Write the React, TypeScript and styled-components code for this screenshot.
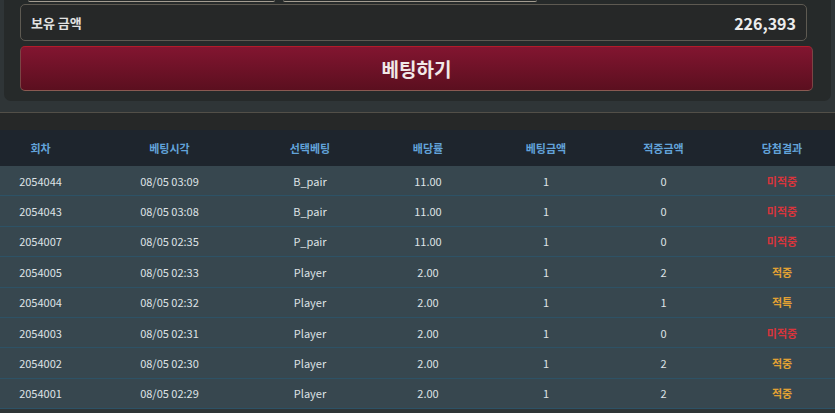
import React from 'react';
import styled, { createGlobalStyle } from 'styled-components';

type Result = 'win' | 'lose' | 'tie';

interface BetRow {
    round: string;
    time: string;
    pick: string;
    odds: string;
    amount: string;
    payout: string;
    result: Result;
}

const rows: BetRow[] = [
    { round: '2054044', time: '08/05 03:09', pick: 'B_pair', odds: '11.00', amount: '1', payout: '0', result: 'lose' },
    { round: '2054043', time: '08/05 03:08', pick: 'B_pair', odds: '11.00', amount: '1', payout: '0', result: 'lose' },
    { round: '2054007', time: '08/05 02:35', pick: 'P_pair', odds: '11.00', amount: '1', payout: '0', result: 'lose' },
    { round: '2054005', time: '08/05 02:33', pick: 'Player', odds: '2.00', amount: '1', payout: '2', result: 'win' },
    { round: '2054004', time: '08/05 02:32', pick: 'Player', odds: '2.00', amount: '1', payout: '1', result: 'tie' },
    { round: '2054003', time: '08/05 02:31', pick: 'Player', odds: '2.00', amount: '1', payout: '0', result: 'lose' },
    { round: '2054002', time: '08/05 02:30', pick: 'Player', odds: '2.00', amount: '1', payout: '2', result: 'win' },
    { round: '2054001', time: '08/05 02:29', pick: 'Player', odds: '2.00', amount: '1', payout: '2', result: 'win' },
];

const resultLabel: Record<Result, string> = {
    win: '적중',
    lose: '미적중',
    tie: '적특',
};

const headers = ['회차', '베팅시각', '선택베팅', '배당률', '베팅금액', '적중금액', '당첨결과'];

const GlobalStyle = createGlobalStyle`
    html, body {
        margin: 0;
        padding: 0;
        background-color: #2f3537;
        overflow: hidden;
    }

    body {
        font-family: "Noto Sans CJK KR", "Noto Sans", sans-serif;
    }
`;

const Page = styled.div`
    display: flex;
    flex-direction: column;
    width: 835px;
    height: 413px;
    overflow: hidden;
`;

const BetPanel = styled.div`
    display: flex;
    flex-direction: column;
    margin: 0 4px;
    padding: 0 18px 10px 16px;
    background-color: #262a2a;
    border-radius: 0 0 7px 7px;
`;

const CutRow = styled.div`
    display: flex;
    gap: 8px;
    padding-left: 8px;
    height: 2px;
`;

const CutBox = styled.div<{ $width: number }>`
    width: ${props => props.$width}px;
    border-bottom: 1px solid #a39c90;
    border-radius: 0 0 3px 3px;
    box-sizing: border-box;
`;

const BalanceBox = styled.div`
    display: flex;
    align-items: center;
    justify-content: space-between;
    height: 37px;
    margin: 2px 6px 0 0;
    padding: 0 10px;
    box-sizing: border-box;
    border: 1px solid #5e5a52;
    border-radius: 5px;
    background-color: #262828;
`;

const BalanceLabel = styled.span`
    font-size: 13px;
    font-weight: 700;
    color: #e2e2e2;
`;

const BalanceValue = styled.span`
    font-size: 16px;
    font-weight: 700;
    color: #ececec;
`;

const BetButton = styled.button`
    height: 45px;
    margin-top: 5px;
    border: 1px solid #7a4545;
    border-top-color: #b31c2a;
    border-bottom-color: #8a5a52;
    border-radius: 5px;
    background: linear-gradient(to bottom, #821530, #5b0f1f);
    color: #f1e8e8;
    font-family: "Noto Sans CJK KR", "Noto Sans", sans-serif;
    font-size: 19px;
    font-weight: 700;
    cursor: pointer;
`;

const HistoryTable = styled.div`
    display: flex;
    flex-direction: column;
    margin-top: 11px;
    border-top: 1px solid #524f48;
`;

const TableGap = styled.div`
    height: 17px;
    background-color: #262828;
`;

const cols = '81px 177px 104px 132px 104px 131px 106px';

const HeaderRow = styled.div`
    display: grid;
    grid-template-columns: ${cols};
    align-items: center;
    height: 36px;
    background-color: #1e252d;
`;

const HeaderCell = styled.div`
    text-align: center;
    font-size: 11px;
    font-weight: 700;
    color: #62a3da;
`;

const DataRow = styled.div`
    display: grid;
    grid-template-columns: ${cols};
    align-items: center;
    height: 30.4px;
    box-sizing: border-box;
    border-bottom: 1px solid #2d5266;
    background-color: #37474f;
`;

const Cell = styled.div`
    text-align: center;
    font-size: 11px;
    color: #dfe3e6;
`;

const ResultCell = styled(Cell)<{ $result: Result }>`
    font-weight: 700;
    color: ${props => props.$result === 'lose' ? '#d8353c' : '#e1a134'};
`;

export default function App() {
    return (
        <Page>
            <GlobalStyle />
            <BetPanel>
                <CutRow>
                    <CutBox $width={247} />
                    <CutBox $width={254} />
                </CutRow>
                <BalanceBox>
                    <BalanceLabel>보유 금액</BalanceLabel>
                    <BalanceValue>226,393</BalanceValue>
                </BalanceBox>
                <BetButton>베팅하기</BetButton>
            </BetPanel>
            <HistoryTable>
                <TableGap />
                <HeaderRow>
                    {headers.map(h => (
                        <HeaderCell key={h}>{h}</HeaderCell>
                    ))}
                </HeaderRow>
                {rows.map(row => (
                    <DataRow key={row.round}>
                        <Cell>{row.round}</Cell>
                        <Cell>{row.time}</Cell>
                        <Cell>{row.pick}</Cell>
                        <Cell>{row.odds}</Cell>
                        <Cell>{row.amount}</Cell>
                        <Cell>{row.payout}</Cell>
                        <ResultCell $result={row.result}>{resultLabel[row.result]}</ResultCell>
                    </DataRow>
                ))}
            </HistoryTable>
        </Page>
    );
}
